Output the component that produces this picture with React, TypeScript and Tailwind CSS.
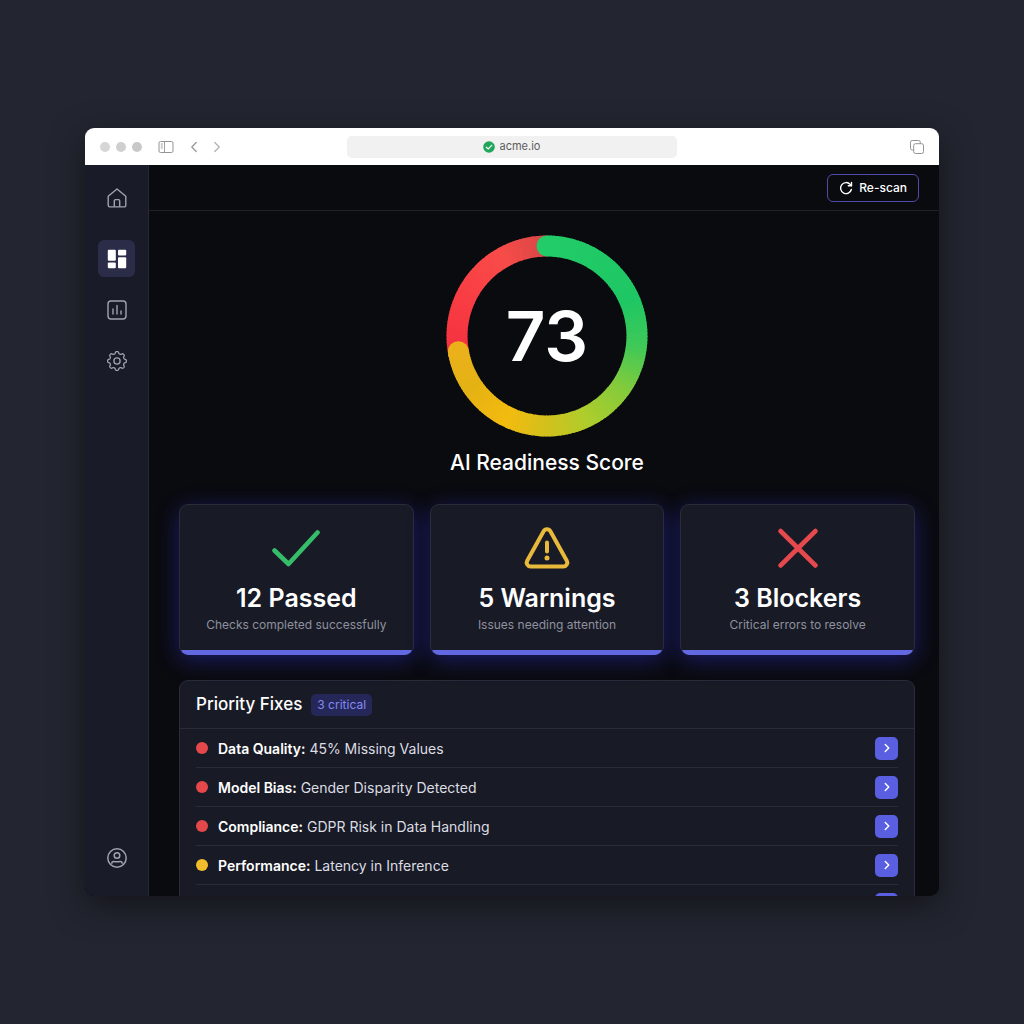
import React from 'react';
import { ChevronLeft, ChevronRight } from 'lucide-react';

type Rgb = [number, number, number];
type Stop = [number, Rgb];
type Severity = 'critical' | 'warning';

interface Fix {
  area: string;
  detail: string;
  severity: Severity;
}

const fixes: Fix[] = [
  { area: 'Data Quality', detail: '45% Missing Values', severity: 'critical' },
  { area: 'Model Bias', detail: 'Gender Disparity Detected', severity: 'critical' },
  { area: 'Compliance', detail: 'GDPR Risk in Data Handling', severity: 'critical' },
  { area: 'Performance', detail: 'Latency in Inference', severity: 'warning' },
];

const scoreStops: Stop[] = [
  [0, [34, 204, 104]],
  [65, [30, 199, 100]],
  [95, [62, 201, 88]],
  [125, [134, 203, 58]],
  [155, [176, 205, 44]],
  [180, [212, 192, 28]],
  [205, [243, 187, 16]],
  [235, [228, 178, 20]],
  [260, [234, 177, 26]],
];

const restStops: Stop[] = [
  [258, [243, 50, 64]],
  [290, [248, 60, 67]],
  [330, [248, 76, 73]],
  [360, [214, 70, 70]],
];

const RING_CENTER = 101;
const RING_RADIUS = 90;
const RING_WIDTH = 21;

const colorAt = (stops: Stop[], angle: number) => {
  const next = Math.max(1, stops.findIndex(([a]) => a >= angle));
  const [a0, c0] = stops[next - 1];
  const [a1, c1] = stops[next];
  const t = (angle - a0) / (a1 - a0);
  return `rgb(${c0.map((c, i) => Math.round(c + (c1[i] - c) * t)).join(',')})`;
};

const pointAt = (angle: number) => {
  const rad = ((angle - 90) * Math.PI) / 180;
  return [RING_CENTER + RING_RADIUS * Math.cos(rad), RING_CENTER + RING_RADIUS * Math.sin(rad)];
};

// SVG has no conic gradient, so the arc is built from short overlapping slices
const GradientArc: React.FC<{ stops: Stop[]; from: number; to: number; rounded?: boolean }> = ({
  stops,
  from,
  to,
  rounded,
}) => {
  const slices = [];
  for (let angle = from; angle < to; angle += 2) {
    const [x0, y0] = pointAt(angle);
    const [x1, y1] = pointAt(Math.min(angle + 2.6, to));
    slices.push(
      <path
        key={angle}
        d={`M${x0} ${y0}A${RING_RADIUS} ${RING_RADIUS} 0 0 1 ${x1} ${y1}`}
        stroke={colorAt(stops, angle)}
        strokeWidth={RING_WIDTH}
        fill="none"
      />
    );
  }
  return (
    <g>
      {slices}
      {rounded &&
        [from, to].map((angle) => {
          const [cx, cy] = pointAt(angle);
          return <circle key={angle} cx={cx} cy={cy} r={RING_WIDTH / 2} fill={colorAt(stops, angle)} />;
        })}
    </g>
  );
};

const ScoreRing: React.FC<{ score: number }> = ({ score }) => (
  <div className="grid place-items-center">
    <svg viewBox="0 0 202 202" className="col-start-1 row-start-1 size-[202px]" aria-hidden="true">
      <GradientArc stops={restStops} from={258} to={360} />
      <GradientArc stops={scoreStops} from={0} to={260} rounded />
    </svg>
    <span className="col-start-1 row-start-1 text-[69px] leading-none font-semibold text-white">{score}</span>
  </div>
);

const HomeIcon = () => (
  <svg viewBox="0 0 20 20" className="size-5" fill="none" stroke="currentColor" strokeWidth="1.4" strokeLinejoin="round">
    <path d="M1.2 8.2 10 1l8.8 7.2v9.1a1.6 1.6 0 0 1-1.6 1.6H2.8a1.6 1.6 0 0 1-1.6-1.6z" />
    <path d="M7.3 18.8v-6a1.2 1.2 0 0 1 1.2-1.2h3a1.2 1.2 0 0 1 1.2 1.2v6" />
  </svg>
);

const DashboardIcon = () => (
  <svg viewBox="0 0 20 20" className="size-5" fill="currentColor">
    <rect x="0.8" y="0.8" width="8" height="11" rx="1" />
    <rect x="0.8" y="13.6" width="8" height="5.6" rx="1" />
    <rect x="11" y="0.8" width="8.2" height="5.6" rx="1" />
    <rect x="11" y="8.2" width="8.2" height="11" rx="1" />
  </svg>
);

const ReportIcon = () => (
  <svg viewBox="0 0 20 20" className="size-5" fill="none" stroke="currentColor" strokeWidth="1.4" strokeLinecap="round">
    <rect x="1" y="1" width="18" height="18" rx="3" />
    <path d="M6 9v5M10 5.5V14M14 11v3" />
  </svg>
);

// Eight soft teeth: the radius swings between root and tip with flattened peaks
const gearOutline = Array.from({ length: 160 }, (_, i) => {
  const angle = (i / 160) * Math.PI * 2;
  const r = 8.4 + 1 * Math.tanh(2.2 * Math.cos(angle * 8));
  return `${(10 + r * Math.sin(angle)).toFixed(2)},${(10 - r * Math.cos(angle)).toFixed(2)}`;
}).join(' ');

const GearIcon = () => (
  <svg viewBox="0 0 20 20" className="size-5" fill="none" stroke="currentColor" strokeWidth="1.3" strokeLinejoin="round">
    <polygon points={gearOutline} />
    <circle cx="10" cy="10" r="3.1" />
  </svg>
);

const UserIcon = () => (
  <svg viewBox="0 0 20 20" className="size-5" fill="none" stroke="currentColor" strokeWidth="1.5">
    <circle cx="10" cy="10" r="9.2" />
    <circle cx="10" cy="7.5" r="2.8" />
    <path d="M4.8 15.8v-.4c0-1.300.9-2 2.100-1.900 2 .3 4.200.3 6.200 0 1.200-.1 2.100.6 2.100 1.900v.4" />
  </svg>
);

const SidebarButton: React.FC<{ label: string; active?: boolean; children: React.ReactNode }> = ({
  label,
  active,
  children,
}) => (
  <button
    type="button"
    aria-label={label}
    className={`flex size-[37px] items-center justify-center rounded-md ${
      active ? 'bg-[#2b2d48] text-white' : 'text-[#a0a2b0] hover:text-white'
    }`}
  >
    {children}
  </button>
);

const Sidebar = () => (
  <aside className="flex w-16 shrink-0 flex-col items-center justify-between border-r border-[#262936] bg-[#191b28] pt-3.5 pb-5">
    <nav className="flex flex-col items-center">
      <SidebarButton label="Home">
        <HomeIcon />
      </SidebarButton>
      <div className="mt-6 flex flex-col gap-[14px]">
        <SidebarButton label="Dashboard" active>
          <DashboardIcon />
        </SidebarButton>
        <SidebarButton label="Reports">
          <ReportIcon />
        </SidebarButton>
        <SidebarButton label="Settings">
          <GearIcon />
        </SidebarButton>
      </div>
    </nav>
    <SidebarButton label="Account">
      <UserIcon />
    </SidebarButton>
  </aside>
);

const BrowserBar = () => (
  <header className="flex h-[37px] shrink-0 items-center bg-white px-[15px] text-[#949494]">
    <div className="flex flex-1 items-center">
      <div className="flex gap-[6px]">
        <span className="size-[10px] rounded-full bg-[#d6d6d6]" />
        <span className="size-[10px] rounded-full bg-[#cfcfcf]" />
        <span className="size-[10px] rounded-full bg-[#c8c8c8]" />
      </div>
      <button type="button" aria-label="Toggle sidebar" className="ml-4">
        <svg viewBox="0 0 16 12" className="h-3 w-4" fill="none" stroke="currentColor">
          <rect x="1" y="0.5" width="14" height="11" rx="1.5" />
          <path d="M6.5 .5v11M2.8 3h2M2.8 5h2M2.8 7h2" strokeWidth="0.9" />
        </svg>
      </button>
      <button type="button" aria-label="Back" className="ml-[11px]">
        <ChevronLeft className="size-[18px]" strokeWidth={1.6} />
      </button>
      <button type="button" aria-label="Forward" className="ml-[5px] text-[#b0b0b0]">
        <ChevronRight className="size-[18px]" strokeWidth={1.6} />
      </button>
    </div>
    <label className="flex h-[22px] w-2/5 items-center justify-center gap-[5px] rounded-[5px] bg-[#f1f1f1]">
      <svg viewBox="0 0 12 12" className="size-3" aria-hidden="true">
        <circle cx="6" cy="6" r="5.8" fill="#20a65a" />
        <path d="m3.3 6.2 1.9 1.8 3.5-3.7" fill="none" stroke="white" strokeWidth="1.2" strokeLinecap="round" />
      </svg>
      <input
        type="text"
        aria-label="Address"
        defaultValue="acme.io"
        className="w-[42px] bg-transparent text-[11px] text-[#5c5c5c] outline-none"
      />
    </label>
    <div className="flex flex-1 justify-end">
      <button type="button" aria-label="Show tabs">
        <svg viewBox="0 0 14 14" className="size-[14px]" fill="none" stroke="currentColor">
          <rect x="3.7" y="3.7" width="9.8" height="9.8" rx="1.8" />
          <path d="M3.7 10H2.2A1.7 1.7 0 0 1 .5 8.3V2.200A1.7 1.7 0 0 1 2.200.5h6.400a1.7 1.7 0 0 1 1.700 1.700v1.500" />
        </svg>
      </button>
    </div>
  </header>
);

const StatCard: React.FC<{ title: string; caption: string; children: React.ReactNode }> = ({
  title,
  caption,
  children,
}) => (
  <article className="overflow-hidden rounded-[9px] border border-b-0 border-[#2a2c3a] bg-[#181a25] text-center shadow-[0_5px_22px_rgba(50,50,220,0.42)]">
    <div className="flex flex-col items-center px-3 pt-[19px] pb-[15px]">
      <svg viewBox="0 0 48 48" className="size-12" fill="none" strokeLinecap="round" strokeLinejoin="round" aria-hidden="true">
        {children}
      </svg>
      <h2 className="mt-3 text-[25px] leading-7 font-semibold text-white">{title}</h2>
      <p className="mt-[3px] text-[12px] leading-5 text-[#8f919e]">{caption}</p>
    </div>
    <div className="h-[5px] bg-[#6168e2]" />
  </article>
);

const OpenButton: React.FC<{ label: string }> = ({ label }) => (
  <button
    type="button"
    aria-label={label}
    className="flex size-[23px] items-center justify-center rounded-[5px] bg-[#5a5fe2] text-white"
  >
    <ChevronRight className="size-[14px]" strokeWidth={2.5} />
  </button>
);

const FixRow: React.FC<{ fix: Fix }> = ({ fix }) => (
  <li className="flex h-[39px] items-center border-b border-[#2a2c37]">
    <span
      className={`size-3 shrink-0 rounded-full ${fix.severity === 'critical' ? 'bg-[#e5484a]' : 'bg-[#f2bd2c]'}`}
    />
    <p className="ml-[10px] flex-1 text-[14px] text-[#dcdde3]">
      <strong className="font-semibold text-white">{fix.area}:</strong> {fix.detail}
    </p>
    <OpenButton label={`Open ${fix.area}`} />
  </li>
);

const App: React.FC = () => {
  return (
    <div className="flex h-screen bg-[#232631] px-[85px] py-32 font-['Inter',sans-serif]">
      <div className="flex min-w-0 flex-1 flex-col overflow-hidden rounded-[9px] bg-[#0a0b0f] shadow-[0_10px_32px_rgba(18,18,20,0.8)]">
        <BrowserBar />

        <div className="flex min-h-0 flex-1">
          <Sidebar />

          <main className="flex min-w-0 flex-1 flex-col">
            {/* Toolbar */}
            <div className="flex h-[46px] shrink-0 items-center justify-end border-b border-[#20222b] px-5">
              <button
                type="button"
                className="flex h-7 items-center gap-[6px] rounded-[6px] border border-[#514aa8] px-[11px] text-[12px] font-medium text-white"
              >
                <svg viewBox="0 0 14 14" className="size-[14px]" fill="none" stroke="currentColor" strokeWidth="1.4" strokeLinecap="round">
                  <path d="M12.4 8.5A5.5 5.5 0 1 1 11.1 3.3l1.2 1.2" />
                  <path d="M12.5 1.5v3.2H9.3" />
                </svg>
                Re-scan
              </button>
            </div>

            <div className="min-h-0 flex-1 overflow-hidden pt-6 pr-6 pl-[30px]">
              {/* Score */}
              <section className="flex flex-col items-center">
                <ScoreRing score={73} />
                <h1 className="mt-3 text-[21px] leading-7 font-medium text-white">AI Readiness Score</h1>
              </section>

              {/* Summary */}
              <section className="mt-[27px] grid grid-cols-3 gap-4">
                <StatCard title="12 Passed" caption="Checks completed successfully">
                  <path d="m2.5 26.5 14 13.500L45.500 8.500" stroke="#36bd69" strokeWidth="4.6" />
                </StatCard>
                <StatCard title="5 Warnings" caption="Issues needing attention">
                  <path
                    d="M20.6 7.2 4.2 36.8a3.8 3.8 0 0 0 3.3 5.7h33a3.8 3.8 0 0 0 3.3-5.7L27.4 7.2a3.9 3.9 0 0 0-6.8 0z"
                    stroke="#e8b93a"
                    strokeWidth="4"
                  />
                  <path d="M24 18.5v9" stroke="#e8b93a" strokeWidth="4" />
                  <circle cx="24" cy="34" r="2.5" fill="#e8b93a" />
                </StatCard>
                <StatCard title="3 Blockers" caption="Critical errors to resolve">
                  <path d="m6.5 7 35 34.5M41.5 7l-35 34.5" stroke="#e5484d" strokeWidth="4.6" />
                </StatCard>
              </section>

              {/* Priority fixes */}
              <section className="mt-[25px] rounded-t-[9px] border border-b-0 border-[#2a2c3a] bg-[#181a25]">
                <div className="flex h-12 items-center gap-[9px] border-b border-[#2a2c37] px-4">
                  <h2 className="text-[17px] font-medium text-white">Priority Fixes</h2>
                  <span className="rounded-[5px] bg-[#252759] px-[6px] py-px text-[12px] leading-5 text-[#8489f2]">
                    3 critical
                  </span>
                </div>
                <ul className="px-4">
                  {fixes.map((fix) => (
                    <FixRow key={fix.area} fix={fix} />
                  ))}
                  <li className="flex h-[39px] items-center justify-end">
                    <OpenButton label="Open remaining fixes" />
                  </li>
                </ul>
              </section>
            </div>
          </main>
        </div>
      </div>
    </div>
  );
};

export default App;
